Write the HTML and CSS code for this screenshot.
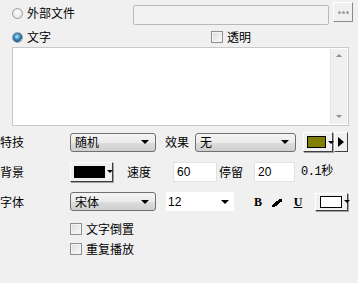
FILE: index.html
```html
<!DOCTYPE html>
<html lang="zh-CN">
<head>
  <meta charset="UTF-8" />
  <title>文字设置</title>
  <link rel="stylesheet" href="styles.css">
</head>
<body>
  <div class="panel">
    <div class="row row-file">
      <span class="radio"></span>
      <span class="txt">外部文件</span>
      <span class="path"></span>
      <span class="browse"><i></i><i></i><i></i></span>
    </div>

    <div class="row row-text">
      <span class="radio on"></span>
      <span class="txt">文字</span>
      <span class="check check-alpha"></span>
      <span class="txt">透明</span>
    </div>

    <div class="memo">
      <div class="vscroll">
        <span class="arr up"></span>
        <span class="arr down"></span>
      </div>
    </div>

    <div class="row row-fx">
      <span class="lbl">特技</span>
      <span class="combo w86"><span class="val">随机</span><b></b></span>
      <span class="txt gap-fx">效果</span>
      <span class="combo w101"><span class="val">无</span><b></b></span>
      <span class="colorbtn w30"><span class="swatch olive"></span><b></b></span>
      <span class="playbtn"><b></b></span>
    </div>

    <div class="row row-bg">
      <span class="lbl">背景</span>
      <span class="colorbtn w43"><span class="swatch black"></span><b></b></span>
      <span class="txt gap-speed">速度</span>
      <span class="edit w44">60</span>
      <span class="txt gap-stay">停留</span>
      <span class="edit w41">20</span>
      <span class="txt unit">0.1秒</span>
    </div>

    <div class="row row-font">
      <span class="lbl">字体</span>
      <span class="combo w86"><span class="val">宋体</span><b></b></span>
      <span class="size"><span class="val">12</span><b></b></span>
      <span class="fmt bold">B</span>
      <span class="fmt ital"></span>
      <span class="fmt under">U</span>
      <span class="colorbtn w33 flat"><span class="swatch white"></span><b></b></span>
    </div>

    <div class="checks">
      <div class="row"><span class="check"></span><span class="txt">文字倒置</span></div>
      <div class="row"><span class="check"></span><span class="txt">重复播放</span></div>
    </div>
  </div>
</body>
</html>
```

FILE: styles.css
```css
body {
  margin: 0;
  background: #f0f0f0;
  font-family: "Noto Sans CJK SC", "Noto Sans", sans-serif;
  font-size: 12px;
  color: #000;
}
.panel {
  width: 358px;
  height: 283px;
  overflow: hidden;
}
.row {
  display: flex;
  align-items: center;
}
.txt, .lbl {
  line-height: 14px;
  white-space: nowrap;
}
.lbl {
  width: 70px;
  flex: none;
}

/* radios and checks */
.radio {
  width: 11px;
  height: 11px;
  margin: 0 4px 0 12px;
  border: 1px solid #9a9a9a;
  border-radius: 50%;
  box-sizing: border-box;
  background: radial-gradient(circle at 50% 40%, #fff, #dcdcdc);
  flex: none;
}
.radio.on {
  background: radial-gradient(circle at 45% 40%, #bfe6ff 0, #2c83b8 45%, #1a5b86 70%, #e8e8e8 72%);
}
.check {
  width: 12px;
  height: 12px;
  border: 1px solid #8e8f8f;
  box-sizing: border-box;
  background: linear-gradient(135deg, #dcdcdc, #fafafa);
  box-shadow: inset 0 0 0 1px #f4f4f4;
  margin-right: 4px;
  flex: none;
}

/* row 1 */
.row-file {
  height: 22px;
  margin-top: 2px;
}
.path {
  width: 196px;
  height: 20px;
  margin: 4px 0 0 58px;
  border: 1px solid #b9b9b9;
  border-radius: 2px;
  box-sizing: border-box;
  background: #f2f2f2;
}
.browse {
  width: 20px;
  height: 20px;
  margin: 0 0 2px 4px;
  box-sizing: border-box;
  border: 1px solid #fff;
  border-right-color: #8a8a8a;
  border-bottom-color: #8a8a8a;
  display: flex;
  align-items: center;
  justify-content: center;
  gap: 1px;
}
.browse i {
  width: 3px;
  height: 3px;
  border-radius: 50%;
  background: #a0a0a0;
}

/* row 2 */
.row-text {
  height: 14px;
  margin-top: 6px;
}
.check-alpha {
  margin-left: 160px;
}

/* memo */
.memo {
  margin: 3px 0 0 12px;
  width: 337px;
  height: 79px;
  box-sizing: border-box;
  border: 1px solid #c9c9c9;
  background: #fff;
  display: flex;
  justify-content: flex-end;
}
.vscroll {
  width: 16px;
  margin: 1px;
  background: #f0f0f0;
  border-left: 1px solid #e4e4e4;
  display: flex;
  flex-direction: column;
  justify-content: space-between;
  align-items: center;
  padding: 5px 0 6px;
}
.arr {
  width: 0;
  height: 0;
  border-left: 3px solid transparent;
  border-right: 3px solid transparent;
}
.arr.up { border-bottom: 3px solid #8d8d8d; }
.arr.down { border-top: 3px solid #8d8d8d; }

/* combos */
.combo {
  height: 19px;
  box-sizing: border-box;
  border: 1px solid #707070;
  border-radius: 3px;
  background: linear-gradient(#f4f4f4, #ebebeb 50%, #dddddd 51%, #cfcfcf);
  display: flex;
  align-items: center;
  justify-content: space-between;
  padding: 0 6px 0 4px;
  flex: none;
}
.combo b, .size b {
  width: 0;
  height: 0;
  border-left: 4px solid transparent;
  border-right: 4px solid transparent;
  border-top: 4px solid #000;
}
.val {
  line-height: 14px;
}
.w86 { width: 86px; }
.w101 { width: 101px; margin-left: 6px; }
.gap-fx { margin-left: 9px; }

/* color buttons */
.colorbtn {
  height: 20px;
  box-sizing: border-box;
  border: 1px solid #fff;
  border-right-color: #404040;
  border-bottom-color: #404040;
  box-shadow: 1px 1px 0 #a0a0a0;
  display: flex;
  align-items: center;
  padding-left: 3px;
  flex: none;
}
.colorbtn b {
  width: 0;
  height: 0;
  margin-left: 2px;
  border-left: 3px solid transparent;
  border-right: 3px solid transparent;
  border-top: 3px solid #000;
}
.swatch {
  height: 12px;
  box-sizing: border-box;
  border: 1px solid #000;
  flex: none;
}
.olive { width: 19px; background: #808000; }
.black { width: 31px; background: #000; }
.white { width: 22px; background: #fff; }
.w30 { width: 30px; margin-left: 7px; }
.w43 { width: 43px; }
.w33 { width: 33px; margin-left: 12px; padding-left: 4px; }
.colorbtn.flat {
  height: 18px;
}
.playbtn {
  width: 14px;
  height: 20px;
  margin-left: 1px;
  box-sizing: border-box;
  border: 1px solid #fff;
  border-right-color: #404040;
  border-bottom-color: #404040;
  display: flex;
  align-items: center;
  justify-content: center;
}
.playbtn b {
  width: 0;
  height: 0;
  border-top: 5px solid transparent;
  border-bottom: 5px solid transparent;
  border-left: 6px solid #000;
}

/* rows */
.row-fx {
  height: 20px;
  margin-top: 6px;
}
.row-bg {
  height: 21px;
  margin-top: 9px;
}
.gap-speed { margin-left: 14px; }
.edit {
  height: 20px;
  box-sizing: border-box;
  border: 1px solid #e2e2e2;
  background: #fff;
  padding: 2px 0 0 3px;
  font-family: "Liberation Sans", sans-serif;
  font-size: 12px;
  line-height: 14px;
  flex: none;
}
.w44 { width: 44px; margin-left: 22px; }
.w41 { width: 41px; margin-left: 11px; }
.gap-stay { margin-left: 2px; }
.unit {
  margin-left: 6px;
  font-family: "Liberation Mono", "Noto Sans CJK SC", monospace;
  letter-spacing: -0.5px;
}

.row-font {
  height: 19px;
  margin-top: 10px;
}
.size {
  width: 68px;
  height: 19px;
  margin-left: 10px;
  box-sizing: border-box;
  background: #fff;
  display: flex;
  align-items: center;
  justify-content: space-between;
  padding: 0 5px 0 2px;
  font-family: "Liberation Sans", sans-serif;
}
.fmt {
  width: 10px;
  height: 12px;
  font-family: "Liberation Serif", serif;
  font-weight: bold;
  font-size: 12px;
  line-height: 12px;
  text-align: center;
}
.bold { margin-left: 19px; }
.ital {
  margin-left: 9px;
  height: 8px;
  margin-top: 2px;
  background: linear-gradient(to bottom right, transparent 38%, #000 38%, #000 64%, transparent 64%);
}
.under {
  margin-left: 11px;
  text-decoration: underline;
}

.checks {
  margin: 11px 0 0 70px;
  display: flex;
  flex-direction: column;
  gap: 6px;
}
.checks .row {
  height: 14px;
}
```
